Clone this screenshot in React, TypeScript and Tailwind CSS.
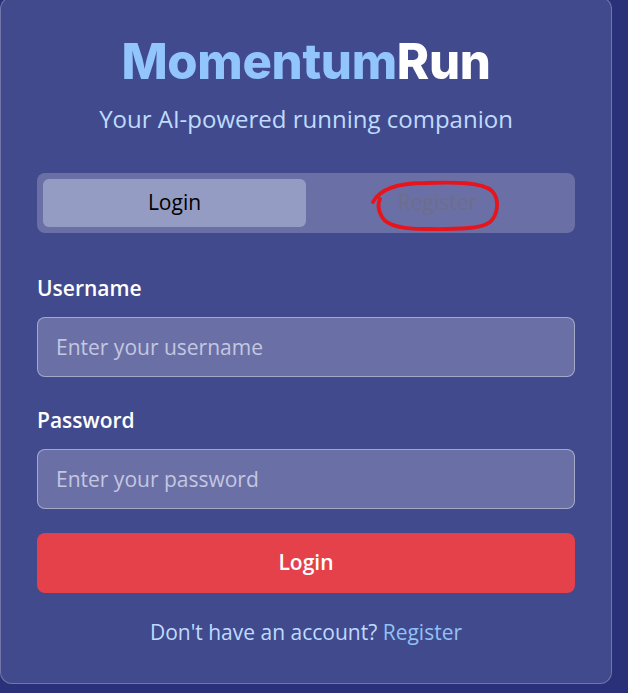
import React, { useState } from 'react';

const bodyFont = { fontFamily: '"Open Sans", "Noto Sans", sans-serif' };

export default function App() {
  const [tab, setTab] = useState<'login' | 'register'>('login');

  return (
    <div
      className="w-[628px] h-[693px] overflow-hidden bg-[#2b3179] text-white"
      style={bodyFont}
    >
      <div className="relative mt-[-3px] w-[612px] h-[687px] rounded-[12px] border border-white/25 bg-[#424a8e] px-[36px] pt-[38px]">
        {/* Header */}
        <h1
          className="h-[52px] text-center text-[49px] font-extrabold leading-[52px] tracking-[-0.3px]"
          style={{ fontFamily: 'Inter, "Noto Sans", sans-serif' }}
        >
          <span className="text-[#93c5fd]">Momentum</span>
          <span className="text-white">Run</span>
        </h1>
        <p className="mt-[15px] text-center text-[24px] leading-[32px] text-[#bfdbfe]">
          Your AI-powered running companion
        </p>

        {/* Tabs */}
        <div className="relative mt-[38px] grid h-[60px] grid-cols-2 rounded-[8px] bg-[#6a70a6] p-[6px]">
          <button
            onClick={() => setTab('login')}
            className={`rounded-[6px] text-[21px] ${
              tab === 'login' ? 'bg-[#959cc4] text-black' : 'text-[#6c6e8a]'
            }`}
          >
            Login
          </button>
          <button
            onClick={() => setTab('register')}
            className={`rounded-[6px] text-[21px] ${
              tab === 'register' ? 'bg-[#959cc4] text-black' : 'text-[#6c6e8a]'
            }`}
          >
            Register
          </button>
          {/* hand-drawn annotation */}
          <svg
            className="pointer-events-none absolute left-[333px] top-[4px]"
            width="130"
            height="56"
            viewBox="0 0 130 56"
            fill="none"
          >
            <path
              d="M3 25 C10 12 28 6 55 6 C85 5 112 5 122 14 C130 22 128 38 120 45 C110 53 80 52 55 52 C35 52 18 50 12 40 C8 33 8 26 10 22"
              stroke="#e8141c"
              strokeWidth="3.8"
              strokeLinecap="round"
              strokeLinejoin="round"
            />
          </svg>
        </div>

        {/* Username */}
        <label className="mt-[41px] block text-[21px] font-semibold leading-[28px]">
          Username
        </label>
        <input
          className="mt-[15px] block h-[60px] w-full rounded-[8px] border border-white/40 bg-[#6a70a6] px-[18px] text-[21px] text-white outline-none placeholder:text-[#c4c7e0]"
          placeholder="Enter your username"
        />

        {/* Password */}
        <label className="mt-[29px] block text-[21px] font-semibold leading-[28px]">
          Password
        </label>
        <input
          type="password"
          className="mt-[15px] block h-[60px] w-full rounded-[8px] border border-white/40 bg-[#6a70a6] px-[18px] text-[21px] text-white outline-none placeholder:text-[#c4c7e0]"
          placeholder="Enter your password"
        />

        <button className="mt-[24px] block h-[60px] w-full rounded-[8px] bg-[#e4414a] text-[21px] font-semibold text-white">
          Login
        </button>

        <p className="mt-[25px] text-center text-[21px] leading-[28px] text-[#bfdbfe]">
          Don't have an account?{' '}
          <span className="text-[#90c2f5]">Register</span>
        </p>
      </div>
    </div>
  );
}
